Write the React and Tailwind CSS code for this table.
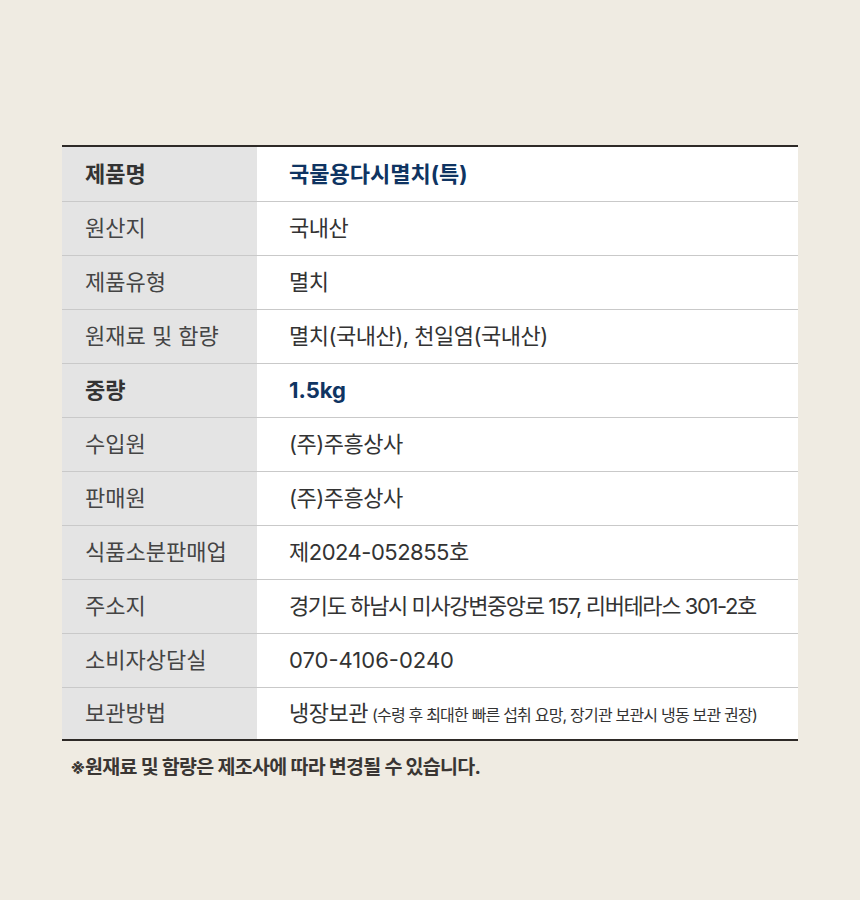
const rows = [
  { label: '제품명', value: '국물용다시멸치(특)', strong: true },
  { label: '원산지', value: '국내산' },
  { label: '제품유형', value: '멸치' },
  { label: '원재료 및 함량', value: '멸치(국내산), 천일염(국내산)' },
  { label: '중량', value: '1.5kg', strong: true },
  { label: '수입원', value: '(주)주흥상사' },
  { label: '판매원', value: '(주)주흥상사' },
  { label: '식품소분판매업', value: '제2024-052855호' },
  { label: '주소지', value: '경기도 하남시 미사강변중앙로 157, 리버테라스 301-2호', spacing: 'tracking-[-1.4px]' },
  { label: '소비자상담실', value: '070-4106-0240', spacing: 'tracking-[0px]' },
  {
    label: '보관방법',
    value: '냉장보관',
    note: '(수령 후 최대한 빠른 섭취 요망, 장기관 보관시 냉동 보관 권장)',
  },
]

export default function App() {
  return (
    <div
      className="w-[860px] h-[900px] bg-[#efebe2] pt-[145px] px-[62px]"
      style={{ fontFamily: 'Inter, "Noto Sans CJK KR", "Noto Sans", sans-serif' }}
    >
      <div className="border-t-2 border-b-2 border-[#2e2a27]">
        {rows.map((row, i) => (
          <div
            key={row.label}
            className={`flex ${i === rows.length - 1 ? 'h-[52px]' : 'h-[54px]'} ${
              i > 0 ? 'border-t border-[#c9c9c9]' : ''
            }`}
          >
            <div
              className={`w-[195px] bg-[#e4e4e4] flex items-center pl-[23px] text-[22px] tracking-[0px] ${
                row.strong ? 'font-bold text-[#333]' : 'text-[#444]'
              }`}
            >
              {row.label}
            </div>
            <div className="flex-1 bg-white flex items-center pl-[32px]">
              <span
                className={`text-[22px] ${
                  row.spacing || (row.strong ? 'tracking-[0px]' : 'tracking-[-0.5px]')
                } ${row.strong ? 'font-bold text-[#0f3462]' : 'text-[#333]'}`}
              >
                {row.value}
              </span>
              {row.note && (
                <span className="ml-[4px] text-[16px] tracking-[-0.8px] text-[#333] pt-[3px]">
                  {row.note}
                </span>
              )}
            </div>
          </div>
        ))}
      </div>
      <p className="mt-[12px] pl-[8px] text-[19.5px] font-bold tracking-[-0.7px] text-[#3a3633]">
        ※원재료 및 함량은 제조사에 따라 변경될 수 있습니다.
      </p>
    </div>
  )
}
